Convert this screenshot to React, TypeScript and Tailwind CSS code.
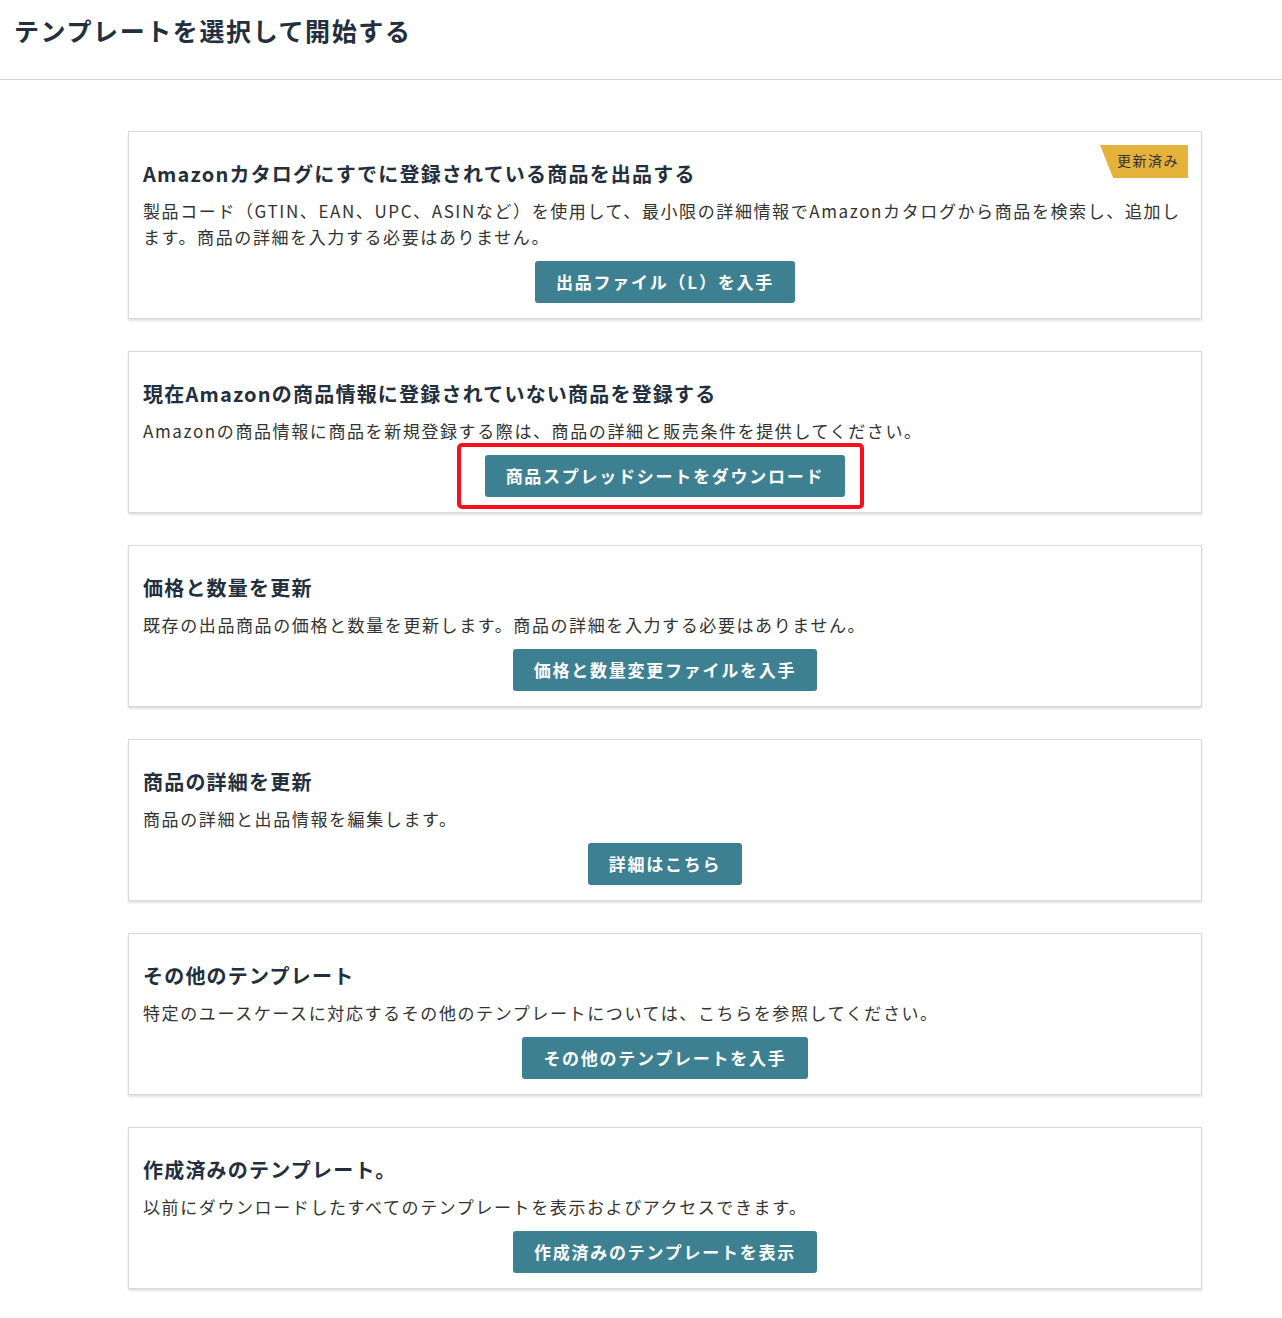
import React from "react";

type Template = {
    title: string;
    description: string;
    button: string;
    badge?: string;
    highlighted?: boolean;
};

const templates: Template[] = [
    {
        title: "Amazonカタログにすでに登録されている商品を出品する",
        description:
            "製品コード（GTIN、EAN、UPC、ASINなど）を使用して、最小限の詳細情報でAmazonカタログから商品を検索し、追加します。商品の詳細を入力する必要はありません。",
        button: "出品ファイル（L）を入手",
        badge: "更新済み",
    },
    {
        title: "現在Amazonの商品情報に登録されていない商品を登録する",
        description: "Amazonの商品情報に商品を新規登録する際は、商品の詳細と販売条件を提供してください。",
        button: "商品スプレッドシートをダウンロード",
        highlighted: true,
    },
    {
        title: "価格と数量を更新",
        description: "既存の出品商品の価格と数量を更新します。商品の詳細を入力する必要はありません。",
        button: "価格と数量変更ファイルを入手",
    },
    {
        title: "商品の詳細を更新",
        description: "商品の詳細と出品情報を編集します。",
        button: "詳細はこちら",
    },
    {
        title: "その他のテンプレート",
        description: "特定のユースケースに対応するその他のテンプレートについては、こちらを参照してください。",
        button: "その他のテンプレートを入手",
    },
    {
        title: "作成済みのテンプレート。",
        description: "以前にダウンロードしたすべてのテンプレートを表示およびアクセスできます。",
        button: "作成済みのテンプレートを表示",
    },
];

function TemplateCard({ t }: { t: Template }) {
    return (
        <div className="relative bg-white border border-[#d9d9d9] shadow-[0_2px_2px_rgba(0,0,0,0.12)] px-[14px] pt-[28px] pb-[15px]">
            {t.badge && (
                <span className="absolute top-[13px] right-[13px] w-[88px] h-[33px] bg-[#e5b23c] text-[#333] text-[14px] tracking-[1.5px] flex items-center justify-end pr-[9px] pb-[2px] [clip-path:polygon(0_0,100%_0,100%_100%,15%_100%)]">
                    {t.badge}
                </span>
            )}
            <h2 className="text-[20px] leading-[28px] font-bold tracking-[1.2px] text-[#232f3e]">{t.title}</h2>
            <p className="mt-[10px] text-[17px] leading-[26px] tracking-[1.6px] text-[#333]">{t.description}</p>
            <div className="mt-[11px] flex justify-center">
                <div className="relative">
                    <button className="h-[42px] px-[21px] rounded-[3px] bg-[#3d8092] text-white text-[17px] font-bold tracking-[1.75px]">
                        {t.button}
                    </button>
                    {t.highlighted && (
                        <span className="absolute -left-[28px] -right-[19px] -top-[12px] -bottom-[12px] border-[4px] border-[#f7101c] rounded-[5px] pointer-events-none" />
                    )}
                </div>
            </div>
        </div>
    );
}

export default function App() {
    return (
        <div className="min-h-[1318px] bg-white font-['Noto_Sans_CJK_JP','Noto_Sans',sans-serif]">
            <div className="h-[80px] border-b border-[#d5d5d5] px-[14px] pt-[12px]">
                <h1 className="text-[25px] leading-[36px] font-bold tracking-[1.6px] text-[#232f3e]">
                    テンプレートを選択して開始する
                </h1>
            </div>
            <div className="ml-[128px] w-[1074px] mt-[51px] pb-[29px] flex flex-col gap-[32px]">
                {templates.map((t) => (
                    <TemplateCard key={t.button} t={t} />
                ))}
            </div>
        </div>
    );
}
